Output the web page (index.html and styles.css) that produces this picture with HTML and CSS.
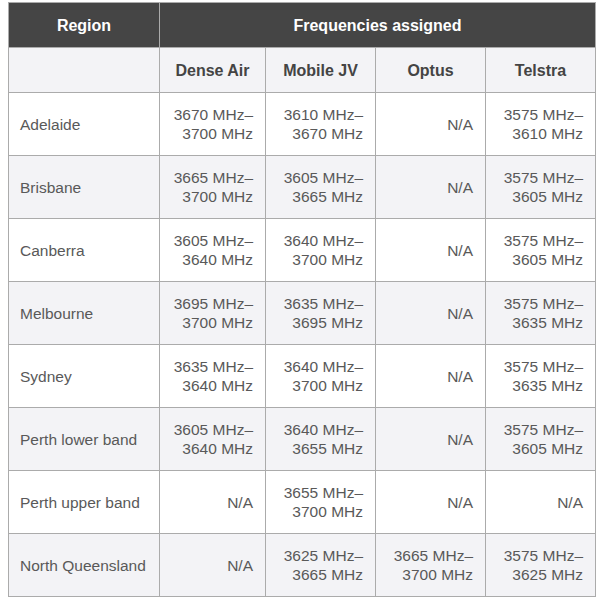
FILE: index.html
```html
<!DOCTYPE html>
<html lang="en">
<head>
<meta charset="utf-8">
<title>Frequencies assigned</title>
<link rel="stylesheet" href="styles.css">
</head>
<body>
<table class="freq">
  <colgroup>
    <col class="c-region">
    <col class="c-op">
    <col class="c-op2">
    <col class="c-op2">
    <col class="c-op2">
  </colgroup>
  <thead>
    <tr class="top">
      <th>Region</th>
      <th colspan="4">Frequencies assigned</th>
    </tr>
    <tr class="sub">
      <th></th>
      <th>Dense Air</th>
      <th>Mobile JV</th>
      <th>Optus</th>
      <th>Telstra</th>
    </tr>
  </thead>
  <tbody>
    <tr>
      <td class="name">Adelaide</td>
      <td>3670 MHz–<br>3700 MHz</td>
      <td>3610 MHz–<br>3670 MHz</td>
      <td>N/A</td>
      <td>3575 MHz–<br>3610 MHz</td>
    </tr>
    <tr class="alt">
      <td class="name">Brisbane</td>
      <td>3665 MHz–<br>3700 MHz</td>
      <td>3605 MHz–<br>3665 MHz</td>
      <td>N/A</td>
      <td>3575 MHz–<br>3605 MHz</td>
    </tr>
    <tr>
      <td class="name">Canberra</td>
      <td>3605 MHz–<br>3640 MHz</td>
      <td>3640 MHz–<br>3700 MHz</td>
      <td>N/A</td>
      <td>3575 MHz–<br>3605 MHz</td>
    </tr>
    <tr class="alt">
      <td class="name">Melbourne</td>
      <td>3695 MHz–<br>3700 MHz</td>
      <td>3635 MHz–<br>3695 MHz</td>
      <td>N/A</td>
      <td>3575 MHz–<br>3635 MHz</td>
    </tr>
    <tr>
      <td class="name">Sydney</td>
      <td>3635 MHz–<br>3640 MHz</td>
      <td>3640 MHz–<br>3700 MHz</td>
      <td>N/A</td>
      <td>3575 MHz–<br>3635 MHz</td>
    </tr>
    <tr class="alt">
      <td class="name">Perth lower band</td>
      <td>3605 MHz–<br>3640 MHz</td>
      <td>3640 MHz–<br>3655 MHz</td>
      <td>N/A</td>
      <td>3575 MHz–<br>3605 MHz</td>
    </tr>
    <tr>
      <td class="name">Perth upper band</td>
      <td>N/A</td>
      <td>3655 MHz–<br>3700 MHz</td>
      <td>N/A</td>
      <td>N/A</td>
    </tr>
    <tr class="alt">
      <td class="name">North Queensland</td>
      <td>N/A</td>
      <td>3625 MHz–<br>3665 MHz</td>
      <td>3665 MHz–<br>3700 MHz</td>
      <td>3575 MHz–<br>3625 MHz</td>
    </tr>
  </tbody>
</table>
</body>
</html>
```
FILE: styles.css
```css
html, body {
  margin: 0;
  padding: 0;
  background: #ffffff;
}

body {
  font-family: "Liberation Sans", Arial, sans-serif;
  font-size: 15.5px;
  color: #595959;
}

.freq {
  margin: 2px 0 0 8px;
  width: 588px;
  table-layout: fixed;
  border-collapse: collapse;
}

.c-region { width: 151px; }
.c-op { width: 106px; }
.c-op2 { width: 110px; }

.freq th,
.freq td {
  border: 1px solid #ababab;
  line-height: 19px;
  vertical-align: middle;
  white-space: nowrap;
}

.freq .top th {
  background: #454545;
  color: #ffffff;
  font-size: 16px;
  font-weight: bold;
  text-align: center;
  height: 44px;
  padding: 0 10px;
}

.freq .sub th {
  background: #f3f3f6;
  color: #444444;
  font-size: 16px;
  font-weight: bold;
  text-align: center;
  height: 44px;
  padding: 0 10px;
}

.freq td {
  height: 62px;
  padding: 0 12px 0 11px;
  text-align: right;
  font-weight: normal;
}

.freq td.name {
  text-align: left;
}

.freq tr.alt td {
  background: #f3f3f6;
}
```
